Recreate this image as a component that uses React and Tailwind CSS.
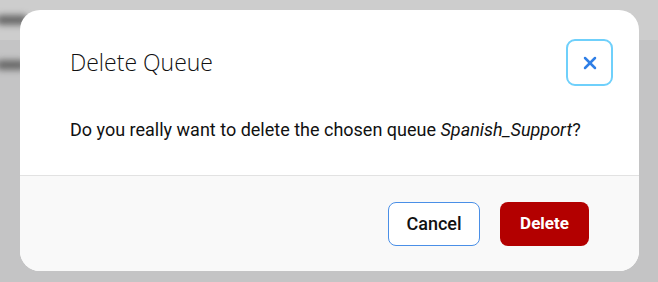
import { X } from "lucide-react";

const Backdrop = () => (
    <div className="absolute inset-0 overflow-hidden bg-[#c4c4c5]">
        <div className="h-[40px] bg-[#cdcdcd]" />
        <div className="absolute left-[-4px] top-[15px] h-[10px] w-[32px] rounded-full bg-[#6a6a6a] blur-[3px]" />
        <div className="absolute left-[-4px] top-[60px] h-[10px] w-[30px] rounded-full bg-[#6a6a6a] blur-[3px]" />
    </div>
);

const App = () => {
    return (
        <div className="relative h-[282px] w-[658px] overflow-hidden font-['Roboto',sans-serif]">
            <Backdrop />
            <div className="relative ml-[20px] mt-[10px] flex h-[261px] w-[619px] flex-col overflow-hidden rounded-[20px] bg-white">
                <div className="flex items-center justify-between pl-[50px] pr-[26px] pt-[29px]">
                    <h2 className="font-['Open_Sans',sans-serif] text-[23px] font-light text-[#111]">
                        Delete Queue
                    </h2>
                    <button className="flex h-[47px] w-[47px] items-center justify-center rounded-[9px] border-2 border-[#6fd0fb] bg-white text-[#2f7fe6]">
                        <X size={20} strokeWidth={3} />
                    </button>
                </div>
                <p className="pl-[50px] pt-[31px] pb-[32px] text-[18px] leading-[26px] text-[#111]">
                    Do you really want to delete the chosen queue <em>Spanish_Support</em>?
                </p>
                <div className="flex flex-1 items-center justify-end gap-[20px] border-t border-[#e2e2e2] bg-[#f9f9f9] pr-[50px]">
                    <button className="h-[44px] w-[92px] rounded-[8px] border border-[#4a8fe7] bg-white text-[18px] font-medium text-[#111]">
                        Cancel
                    </button>
                    <button className="h-[44px] w-[89px] rounded-[8px] bg-[#b30000] text-[17px] font-bold text-white">
                        Delete
                    </button>
                </div>
            </div>
        </div>
    );
};

export default App;
